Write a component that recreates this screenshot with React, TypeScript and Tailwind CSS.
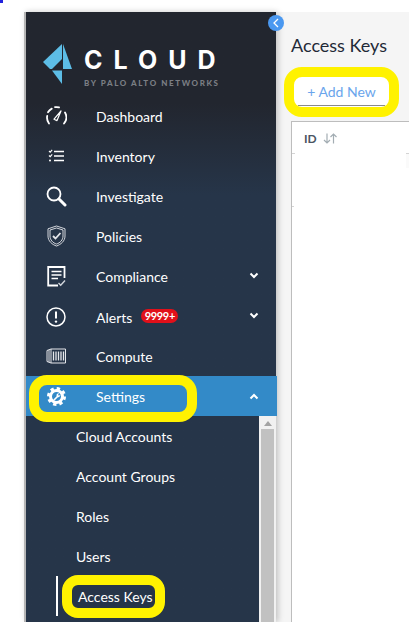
const font = { fontFamily: "Lato, 'Noto Sans', sans-serif" };

const Gauge = () => (
  <svg width="21" height="20" viewBox="0 0 21 20" fill="none" stroke="white" strokeWidth="1.8" strokeLinecap="round">
    <path d="M3 17.5A9.5 9.5 0 0 1 1.2 10" />
    <path d="M2 6.2A9.5 9.5 0 0 1 5.8 2.6" />
    <path d="M9 1.2A9.5 9.5 0 0 1 13 1.4" />
    <path d="M19 6.5A9.5 9.5 0 0 1 18 17.5" />
    <path d="M8 13.2L15 5L11 14.6Z" strokeWidth="1.2" strokeLinejoin="round" />
  </svg>
);

const ListCheck = () => (
  <svg width="16" height="14" viewBox="0 0 16 14" fill="none" stroke="white" strokeWidth="1.7">
    <path d="M6 2.5H16M6 7H16M6 11.5H16" />
    <path d="M1 2L2.2 3.2L4.2 0.8M1 6.5L2.2 7.7L4.2 5.3" strokeWidth="1.1" />
    <circle cx="2" cy="11.5" r="1" fill="white" stroke="none" />
  </svg>
);

const Search = () => (
  <svg width="21" height="21" viewBox="0 0 21 21" fill="none" stroke="white">
    <circle cx="8" cy="8" r="6.5" strokeWidth="1.8" />
    <path d="M13 13L19 19" strokeWidth="3" strokeLinecap="round" />
  </svg>
);

const Shield = () => (
  <svg width="19" height="22" viewBox="0 0 19 22" fill="none" stroke="#e5e7eb" strokeWidth="0.9">
    <path d="M9.5 1L18 3.8V11C18 16 14 19.5 9.5 21C5 19.5 1 16 1 11V3.8Z" />
    <path d="M9.5 3L16 5V11C16 15 13 18 9.5 19C6 18 3 15 3 11V5Z" />
    <path d="M6 11L8.5 13.5L13.5 8" strokeWidth="1.8" />
  </svg>
);

const Report = () => (
  <svg width="19" height="21" viewBox="0 0 19 21" fill="none" stroke="white" strokeWidth="1.8">
    <path d="M11 19.5H1.2V1H17.5V12" />
    <path d="M4.5 5.5H14.5M4.5 9H14.5M4.5 12.5H11" strokeWidth="1.6" />
    <path d="M11.5 17L13.7 19.2L18 14.5" stroke="#d1d5db" strokeWidth="1.4" />
  </svg>
);

const Alert = () => (
  <svg width="20" height="20" viewBox="0 0 20 20" fill="none" stroke="white" className="mt-[1px]">
    <circle cx="10" cy="10" r="9" strokeWidth="1.5" />
    <path d="M10 4.5V11.5" strokeWidth="2" />
    <circle cx="10" cy="14.6" r="1.2" fill="white" stroke="none" />
  </svg>
);

const Container = () => (
  <svg width="20" height="16" viewBox="0 0 20 16" fill="none" stroke="#e5e7eb" strokeWidth="1">
    <path d="M5 1L1 2.5V13.5L5 15H19.5V1Z" />
    <path d="M5 1V15M3 2V14" />
    <path d="M7.5 3.5V12.5M10 3.5V12.5M12.5 3.5V12.5M15 3.5V12.5M17.5 3.5V12.5" strokeWidth="1.3" />
  </svg>
);

const Gear = () => (
  <svg width="19" height="19" viewBox="0 0 19 19" fill="none">
    <circle cx="9.5" cy="9.5" r="6" stroke="white" strokeWidth="3" />
    <circle cx="9.5" cy="9.5" r="8" stroke="white" strokeWidth="3" strokeDasharray="3.3 2.98" />
    <path d="M6.2 12.8L9.6 9.2A2.3 2.3 0 0 1 12.5 6.3L11 7.8L12 8.8L13.2 7.4A2.4 2.4 0 0 1 10.6 10.4L7.4 13.8Z" fill="white" />
  </svg>
);

const Chevron = ({ up }: { up?: boolean }) => (
  <svg width="10" height="7" viewBox="0 0 10 7" fill="none" stroke="white" strokeWidth="2">
    <path d={up ? "M1.5 5.5L5 2L8.5 5.5" : "M1.5 1.5L5 5L8.5 1.5"} />
  </svg>
);

const menu = [
  { label: "Dashboard", icon: <Gauge /> },
  { label: "Inventory", icon: <ListCheck /> },
  { label: "Investigate", icon: <Search /> },
  { label: "Policies", icon: <Shield /> },
  { label: "Compliance", icon: <Report />, chevron: true },
  { label: "Alerts", icon: <Alert />, chevron: true, badge: "9999+" },
  { label: "Compute", icon: <Container /> },
];

const subMenu = ["Cloud Accounts", "Account Groups", "Roles", "Users"];

export default function App() {
  return (
    <div className="relative h-[622px] w-[409px] overflow-hidden bg-white pt-3 pl-6" style={font}>
      <div className="absolute top-0 left-0 h-[3px] w-[3px] bg-[#2222dd]" />
      <div className="flex h-[610px]">
        <aside className="relative z-10 w-[252px] shrink-0 border-l-2 border-[#b5b5b5] bg-gradient-to-b from-[#22262f] from-15% to-[#263549] to-30% shadow-[2px_0_6px_rgba(0,0,0,0.22)]">
          <div className="flex h-[84px] items-start pt-[31px] pl-4">
            <svg width="31" height="41" viewBox="0 0 31 41" className="shrink-0">
              <path d="M1 19L20 1V16L10 26H8Z" fill="#5dbde6" />
              <path d="M21 1L30 26H21Z" fill="#5dbde6" />
              <path d="M10 27.5H20V41Z" fill="#5dbde6" />
            </svg>
            <div className="ml-[11px]">
              <div className="mt-[1px] text-[25px] leading-[32px] tracking-[11px] whitespace-nowrap text-white" style={{ fontFamily: "Inter, sans-serif", fontWeight: 700 }}>
                CLOUD
              </div>
              <div className="mt-[2px] text-[8px] leading-[11px] font-black tracking-[1.6px] whitespace-nowrap text-[#7b7e84]">
                BY PALO ALTO NETWORKS
              </div>
            </div>
          </div>

          {menu.map((item) => (
            <div key={item.label} className="flex h-10 items-center text-[14px] text-white">
              <div className="flex w-[70px] shrink-0 justify-center pr-[10px]">{item.icon}</div>
              <span className={item.badge ? "pt-[2px]" : ""}>{item.label}</span>
              {item.badge && (
                <span className="ml-[9px] flex h-[14px] w-[37px] items-center justify-center rounded-full bg-[#e1101a] text-[11px] font-bold tracking-[-0.3px] text-white">
                  {item.badge}
                </span>
              )}
              {item.chevron && (
                <span className="mr-[17px] ml-auto -mt-[2px] flex">
                  <Chevron />
                </span>
              )}
            </div>
          ))}

          <div className="-mr-[1px] flex h-10 items-center bg-[#338ac8] text-[14px] text-white">
            <div className="flex w-[70px] shrink-0 justify-center pr-[10px]">
              <Gear />
            </div>
            <span>Settings</span>
            <span className="mr-[18px] ml-auto flex">
              <Chevron up />
            </span>
          </div>

          <div className="flex h-[206px] overflow-hidden">
            <div className="flex-1 pl-[50px] text-[14px] text-white">
              {subMenu.map((label) => (
                <div key={label} className="flex h-10 items-center">
                  {label}
                </div>
              ))}
              <div className="-ml-5 flex h-10 items-center border-l-2 border-white pl-5">
                Access Keys
              </div>
            </div>
            <div className="flex w-[17px] shrink-0 flex-col items-center bg-[#f1f1f1]">
              <div className="mt-[5px] h-0 w-0 border-x-[4px] border-b-[5px] border-x-transparent border-b-[#a3a3a3]" />
              <div className="mt-[3px] h-full w-[13px] bg-[#c1c1c1]" />
            </div>
          </div>

          <button className="absolute top-[3px] -right-2 flex h-4 w-4 items-center justify-center rounded-full bg-[#4a98f0]">
            <svg width="6" height="10" viewBox="0 0 6 10" fill="none" stroke="white" strokeWidth="1.3">
              <path d="M5 1L1 5L5 9" />
            </svg>
          </button>
        </aside>

        <main className="flex-1 overflow-hidden bg-[#f5f5f5] pt-[23px] pl-[15px]">
          <h1 className="text-[18px] leading-5 text-[#1f2937]">Access Keys</h1>
          <div className="mt-[22px] ml-[3px] flex h-[30px] w-[95px] justify-center rounded-md bg-white pt-[6px] text-[14px] leading-[18px] text-[#6aa5ec]">
            + Add New
          </div>
          <div className="relative mt-[14px] h-[600px] w-[200px] border border-[#bdbdbd] bg-white">
            <div className="flex h-[33px] items-center pl-[12px] text-[12px] font-bold text-[#4b5563]">
              ID
              <svg width="14" height="11" viewBox="0 0 14 11" fill="none" stroke="#a3adb3" strokeWidth="1.2" className="ml-[6px]">
                <path d="M4 0.5V10M1 7L4 10L7 7" />
                <path d="M10.5 10.5V1M7.5 4L10.5 1L13.5 4" />
              </svg>
            </div>
            <div className="absolute top-[31px] left-0 h-px w-[3px] bg-[#d4d4d4]" />
            <div className="absolute top-[84px] left-0 h-px w-[2px] bg-[#d4d4d4]" />
            <div className="absolute top-[31px] left-[114px] h-[15px] w-[4px] border-t border-[#d4d4d4] bg-[#fafafa]" />
          </div>
        </main>
      </div>

      <div className="absolute top-[320px] left-6 h-[30px] w-px bg-[#2aa3bd]" />
      <div className="absolute top-[424px] left-6 h-[34px] w-px bg-[#2aa3bd]" />
      <div className="absolute top-[478px] left-6 h-[24px] w-px bg-[#2aa3bd]" />

      <div className="absolute top-[375px] left-[29px] z-20 h-[47px] w-[168px] rounded-[18px] border-[10px] border-[#fff200]" />
      <div className="absolute top-[575px] left-[62px] z-20 h-[43px] w-[103px] rounded-[16px] border-[10px] border-[#fff200]" />
      <div className="absolute top-[67px] left-[284px] z-20 h-[50px] w-[115px] rounded-[18px] border-[10px] border-[#fff200]">
        <div className="absolute right-[4px] bottom-[1px] left-[4px] h-px bg-[#8a8a8a]" />
      </div>
    </div>
  );
}
